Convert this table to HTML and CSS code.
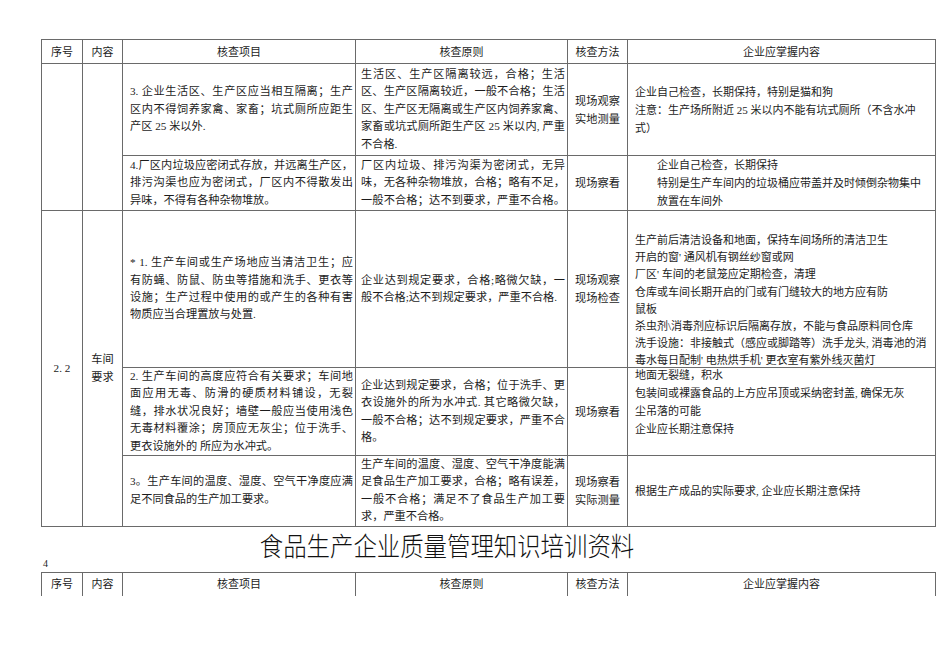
FILE: index.html
```html
<!DOCTYPE html>
<html lang="zh-CN">
<head>
<meta charset="utf-8">
<title>食品生产企业质量管理知识培训资料</title>
<link rel="stylesheet" href="styles.css">
</head>
<body>
<div class="page">
  <table class="grid">
    <colgroup>
      <col class="w1"><col class="w2"><col class="w3"><col class="w4"><col class="w5"><col class="w6">
    </colgroup>
    <tr class="head">
      <th>序号</th><th>内容</th><th>核查项目</th><th>核查原则</th><th>核查方法</th><th>企业应掌握内容</th>
    </tr>
    <tr class="r1">
      <td rowspan="2"></td>
      <td rowspan="2"></td>
      <td class="item">
        <div class="j">3. 企业生活区、生产区应当相互隔离；生产</div>
        <div class="j">区内不得饲养家禽、家畜；坑式厕所应距生</div>
        <div>产区 25 米以外.</div>
      </td>
      <td class="rule">
        <div class="j">生活区、生产区隔离较远，合格；生活</div>
        <div class="j">区、生产区隔离较近，一般不合格；生活</div>
        <div class="j">区、生产区无隔离或生产区内饲养家禽、</div>
        <div class="j">家畜或坑式厕所距生产区 25 米以内, 严重</div>
        <div>不合格.</div>
      </td>
      <td class="method">现场观察<br>实地测量</td>
      <td class="know">
        <div>企业自己检查，长期保持，特别是猫和狗</div>
        <div>注意：生产场所附近 25 米以内不能有坑式厕所（不含水冲</div>
        <div>式）</div>
      </td>
    </tr>
    <tr class="r2">
      <td class="item">
        <div class="j">4.厂区内垃圾应密闭式存放，并远离生产区，</div>
        <div class="j">排污沟渠也应为密闭式，厂区内不得散发出</div>
        <div>异味，不得有各种杂物堆放。</div>
      </td>
      <td class="rule">
        <div class="j">厂区内垃圾、排污沟渠为密闭式，无异</div>
        <div class="j">味，无各种杂物堆放，合格；略有不足，</div>
        <div class="j">一般不合格；达不到要求，严重不合格。</div>
      </td>
      <td class="method">现场察看</td>
      <td class="know indent">
        <div>企业自己检查，长期保持</div>
        <div>特别是生产车间内的垃圾桶应带盖并及时倾倒杂物集中</div>
        <div>放置在车间外</div>
      </td>
    </tr>
    <tr class="r3">
      <td rowspan="3" class="num">2. 2</td>
      <td rowspan="3" class="cat">车间<br>要求</td>
      <td class="item">
        <div class="j">* 1. 生产车间或生产场地应当清洁卫生；应</div>
        <div class="j">有防蝇、防鼠、防虫等措施和洗手、更衣等</div>
        <div class="j">设施；生产过程中使用的或产生的各种有害</div>
        <div>物质应当合理置放与处置.</div>
      </td>
      <td class="rule">
        <div class="j">企业达到规定要求，合格;略微欠缺，一</div>
        <div>般不合格;达不到规定要求，严重不合格.</div>
      </td>
      <td class="method">现场观察<br>现场检查</td>
      <td class="know list">
        <div class="tight">
          <div>生产前后清洁设备和地面，保持车间场所的清洁卫生</div>
          <div>开启的窗' 通风机有钢丝纱窗或网</div>
          <div>厂区' 车间的老鼠笼应定期检查，清理</div>
          <div>仓库或车间长期开启的门或有门缝较大的地方应有防</div>
          <div>鼠板</div>
          <div>杀虫剂\消毒剂应标识后隔离存放，不能与食品原料同仓库</div>
          <div>洗手设施：非接触式（感应或脚踏等）洗手龙头, 消毒池的消</div>
          <div>毒水每日配制' 电热烘手机' 更衣室有紫外线灭菌灯</div>
        </div>
      </td>
    </tr>
    <tr class="r4">
      <td class="item">
        <div class="j">2. 生产车间的高度应符合有关要求；车间地</div>
        <div class="j">面应用无毒、防滑的硬质材料铺设，无裂</div>
        <div class="j">缝，排水状况良好；墙壁一般应当使用浅色</div>
        <div class="j">无毒材料覆涂；房顶应无灰尘；位于洗手、</div>
        <div>更衣设施外的 所应为水冲式。</div>
      </td>
      <td class="rule">
        <div class="j">企业达到规定要求，合格；位于洗手、更</div>
        <div class="j">衣设施外的所为水冲式. 其它略微欠缺，</div>
        <div class="j">一般不合格；达不到规定要求，严重不合</div>
        <div>格。</div>
      </td>
      <td class="method">现场察看</td>
      <td class="know top">
        <div class="lift">
          <div>地面无裂缝，积水</div>
          <div>包装间或裸露食品的上方应吊顶或采纳密封盖, 确保无灰</div>
          <div>尘吊落的可能</div>
          <div>企业应长期注意保持</div>
        </div>
      </td>
    </tr>
    <tr class="r5">
      <td class="item">
        <div class="j">3。生产车间的温度、湿度、空气干净度应满</div>
        <div>足不同食品的生产加工要求。</div>
      </td>
      <td class="rule">
        <div class="j">生产车间的温度、湿度、空气干净度能满</div>
        <div class="j">足食品生产加工要求，合格；略有误差，</div>
        <div class="j">一般不合格；满足不了食品生产加工要</div>
        <div>求，严重不合格。</div>
      </td>
      <td class="method">现场察看<br>实际测量</td>
      <td class="know">
        <div>根据生产成品的实际要求, 企业应长期注意保持</div>
      </td>
    </tr>
  </table>

  <div class="title"><span class="title-text">食品生产企业质量管理知识培训资料</span></div>
  <div class="pageno">4</div>

  <table class="grid next">
    <colgroup>
      <col class="w1"><col class="w2"><col class="w3"><col class="w4"><col class="w5"><col class="w6">
    </colgroup>
    <tr class="head">
      <th>序号</th><th>内容</th><th>核查项目</th><th>核查原则</th><th>核查方法</th><th>企业应掌握内容</th>
    </tr>
  </table>
</div>
</body>
</html>
```
FILE: styles.css
```css
body {
  margin: 0;
  background: #ffffff;
  color: #1c1c1c;
  font-family: "Liberation Serif", "Noto Sans CJK SC", serif;
  font-size: 11.2px;
}

.page {
  width: 894px;
  padding: 39px 0 0 41px;
}

.grid {
  width: 894px;
  border-collapse: collapse;
  table-layout: fixed;
}

.w1 { width: 41px; }
.w2 { width: 40px; }
.w3 { width: 233px; }
.w4 { width: 212px; }
.w5 { width: 60px; }
.w6 { width: 308px; }

.grid th,
.grid td {
  border: 1px solid #6a6a6a;
  padding: 0;
  font-weight: normal;
  vertical-align: middle;
  line-height: 18px;
}

.head { height: 24px; }
.head th { font-size: 11px; text-align: center; }

.r1 { height: 92px; }
.r2 { height: 51px; }
.r3 { height: 157px; }
.r4 { height: 88px; }
.r5 { height: 67px; }

.grid td.item {
  padding: 0 2px 0 7px;
  line-height: 17.4px;
}

.grid td.rule {
  padding: 0 2px 0 5px;
  line-height: 17.4px;
}

.j {
  text-align: justify;
  text-align-last: justify;
}

.method,
.num,
.cat {
  text-align: center;
}

.grid td.know {
  padding: 0 2px 0 7px;
  font-size: 11px;
  white-space: nowrap;
}

.grid td.know.indent { padding-left: 29px; }

.grid td.know.list {
  vertical-align: top;
  padding-top: 21px;
  line-height: 17.2px;
}

.tight { margin-bottom: -14px; }

.grid td.know.top { vertical-align: top; }

.lift { margin-top: -2px; margin-bottom: -4px; }

.title {
  margin-top: 4px;
  padding-right: 82px;
  height: 28px;
  line-height: 28px;
  text-align: center;
  font-family: "Noto Sans CJK SC", sans-serif;
  font-weight: 300;
  font-size: 26px;
  color: #111;
}

.title-text {
  display: inline-block;
  transform: scaleX(0.9);
}

.pageno {
  height: 10px;
  line-height: 10px;
  margin-bottom: 3px;
  padding-left: 2px;
  font-size: 10px;
}

.next .head th {
  border-bottom: none;
  height: 21px;
}
```
